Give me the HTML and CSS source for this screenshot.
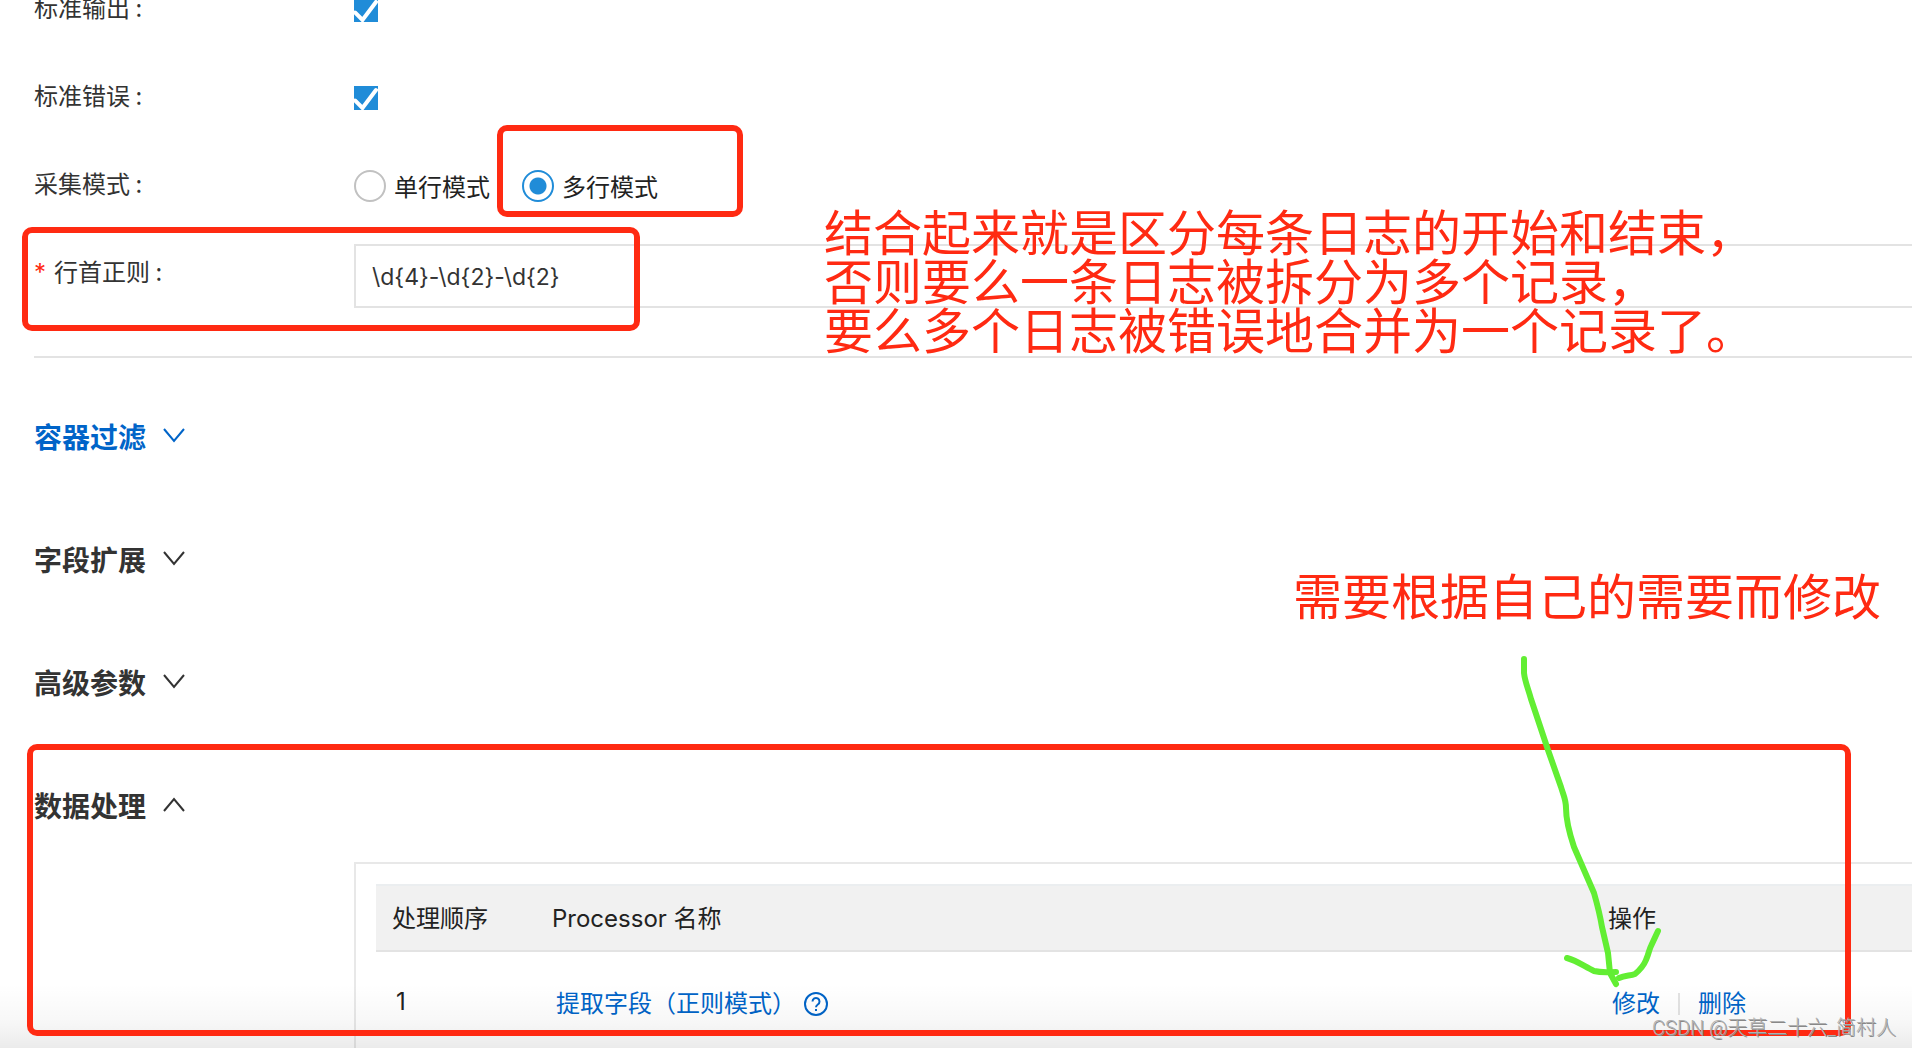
FILE: index.html
```html
<!DOCTYPE html>
<html lang="zh-CN">
<head>
<meta charset="utf-8">
<title>日志采集配置</title>
<link rel="stylesheet" href="styles.css">
</head>
<body>
<main class="page">
  <form class="form">
    <div class="row">
      <label class="row-label" for="stdout">标准输出 :</label>
      <input class="check" type="checkbox" id="stdout" checked>
    </div>
    <div class="row">
      <label class="row-label" for="stderr">标准错误 :</label>
      <input class="check" type="checkbox" id="stderr" checked>
    </div>
    <div class="row" role="radiogroup" aria-labelledby="mode-label">
      <span class="row-label" id="mode-label">采集模式 :</span>
      <div class="radios">
        <label class="radio-item"><input class="radio" type="radio" name="mode">单行模式</label>
        <label class="radio-item"><input class="radio" type="radio" name="mode" checked>多行模式</label>
      </div>
    </div>
    <div class="row row-input">
      <label class="row-label" for="regex"><span class="required">*</span>行首正则 :</label>
      <input class="text-input" type="text" id="regex" value="\d{4}-\d{2}-\d{2}">
    </div>
  </form>
  <hr class="divider">
  <div class="sections">
    <button class="section active" type="button">容器过滤
      <svg class="chevron" viewBox="0 0 24 16"><path d="M2 1l10 12L22 1"/></svg></button>
    <button class="section" type="button">字段扩展
      <svg class="chevron" viewBox="0 0 24 16"><path d="M2 1l10 12L22 1"/></svg></button>
    <button class="section" type="button">高级参数
      <svg class="chevron" viewBox="0 0 24 16"><path d="M2 1l10 12L22 1"/></svg></button>
    <button class="section" type="button" aria-expanded="true">数据处理
      <svg class="chevron" viewBox="0 0 24 16"><path d="M2 14L12 2l10 12"/></svg></button>
  </div>
  <div class="panel">
    <table class="table">
      <thead>
        <tr><th class="col-order">处理顺序</th><th>Processor 名称</th><th class="col-action">操作</th></tr>
      </thead>
      <tbody>
        <tr>
          <td>1</td>
          <td>
            <div class="cell">
              <a class="link" href="#">提取字段（正则模式）</a>
              <svg class="help" viewBox="0 0 24 24"><circle cx="12" cy="12" r="11"/><path d="M8.500 9.500a3.500 3.500 0 1 1 5.300 3c-1.200.8-1.800 1.300-1.800 2.700"/><path d="M12 17v2"/></svg>
            </div>
          </td>
          <td>
            <div class="cell">
              <a class="link" href="#">修改</a>
              <span class="separator"></span>
              <a class="link" href="#">删除</a>
            </div>
          </td>
        </tr>
      </tbody>
    </table>
  </div>

  <div class="shade"></div>
  <div class="mark mark-mode"></div>
  <div class="mark mark-regex"></div>
  <div class="mark mark-process"></div>
  <p class="note note-regex">结合起来就是区分每条日志的开始和结束，<br>否则要么一条日志被拆分为多个记录，<br>要么多个日志被错误地合并为一个记录了。</p>
  <p class="note note-edit">需要根据自己的需要而修改</p>
  <svg class="arrow" viewBox="1560 650 110 350">
    <path d="M1524 659V673C1525 682 1528 688 1531 699L1548 750L1561 787C1564 797 1566 800 1566 808C1566 822 1570 835 1574 847L1594 893C1598 907 1600 915 1602 927L1608 953L1610 973L1616 984"/>
    <path d="M1567 958C1578 961 1585 967 1594 971C1602 973 1609 972 1616 972"/>
    <path d="M1619 978C1625 975 1630 976 1635 974C1641 969 1644 965 1646 960C1649 953 1649 950 1651 946L1658 931"/>
  </svg>
  <div class="watermark">CSDN @天草二十六_简村人</div>
</main>
</body>
</html>
```
FILE: styles.css
```css
* { box-sizing: border-box; }

body {
  margin: 0;
  background: #fff;
  color: #333;
  font: 24px/32px Inter, "Noto Sans CJK SC", sans-serif;
}

.page {
  position: relative;
  height: 100vh;
  overflow: hidden;
  padding-left: 34px;
}

/* The form is scrolled so that its first row is cut by the window. */
.form { margin-top: -34px; }

.row {
  display: grid;
  grid-template-columns: 320px 1fr;
  align-items: center;
  height: 88px;
}
.row-input { height: 92px; }
.row-label { padding-bottom: 6px; font-family: "Noto Sans CJK SC", sans-serif; }
.row-input .row-label { padding-bottom: 8px; }
.required { margin-right: 8px; color: #ff2a12; font-family: Inter, sans-serif; }

.check, .radio { appearance: none; margin: 0; flex: none; }
.check {
  width: 24px;
  height: 24px;
  background: #208cd8 url('data:image/svg+xml,<svg xmlns="http://www.w3.org/2000/svg" viewBox="0 0 24 24"><path d="M1 14.500L8.500 22L22 4" fill="none" stroke="white" stroke-width="4" stroke-linecap="round"/></svg>');
}

.radios { display: flex; gap: 32px; }
.radio-item { display: flex; align-items: center; gap: 8px; color: #222; font-family: "Noto Sans CJK SC", sans-serif; }
.radio {
  width: 32px;
  height: 32px;
  border: 2px solid #c1c1c1;
  border-radius: 50%;
}
.radio:checked {
  border-color: #208cd8;
  background: radial-gradient(circle, #208cd8 8px, #fff 9px);
}

.text-input {
  width: 100%;
  height: 64px;
  padding: 2px 16px 0;
  border: 2px solid #e3e3e3;
  border-right: 0;
  background: #fff;
  color: #333;
  font: inherit;
  font-size: 23px;
}

.divider { height: 2px; margin: 34px 0 0; border: 0; background: #e3e3e3; }

.sections {
  display: flex;
  flex-direction: column;
  align-items: flex-start;
  gap: 83px;
  margin-top: 58px;
}
.section {
  display: flex;
  align-items: center;
  gap: 16px;
  padding: 0;
  border: 0;
  background: none;
  color: #333;
  font: bold 28px/40px "Noto Sans CJK SC", sans-serif;
}
.section.active { color: #0064c8; }
.chevron { width: 24px; height: 16px; fill: none; stroke: currentColor; stroke-width: 2; }

.panel {
  margin: 37px 0 0 320px;
  padding: 20px 0 60px 20px;
  border: 2px solid #e8e8e8;
  border-right: 0;
}
.table { width: 100%; table-layout: fixed; border-collapse: separate; border-spacing: 0; color: #222; }
.table th {
  height: 68px;
  padding: 2px 16px 0;
  border-top: 2px solid #ebeef0;
  border-bottom: 2px solid #e3e3e3;
  background: #f1f1f1;
  font-weight: 400;
  text-align: left;
}
.table td { height: 100px; padding: 0 20px; }
.col-order { width: 160px; }
.col-action { width: 320px; }
.cell { display: flex; align-items: center; padding-top: 3px; }
.link { color: #0064c8; text-decoration: none; }
.help { width: 24px; height: 24px; margin-left: 8px; fill: none; stroke: #0064c8; stroke-width: 2; }
.separator { width: 2px; height: 22px; margin: 0 18px; background: #e3e3e3; }

/* Soft shade over the lower edge of the window. */
.shade {
  position: absolute;
  right: 0;
  bottom: 0;
  left: 0;
  height: 64px;
  background: linear-gradient(rgba(0, 0, 0, 0), rgba(0, 0, 0, .03) 60%, rgba(0, 0, 0, .08));
}

/* Annotations drawn over the form */
.mark { position: absolute; border: 6px solid #ff2a12; border-radius: 10px; }
.mark-mode { left: 497px; top: 125px; width: 246px; height: 92px; }
.mark-regex { left: 22px; top: 227px; width: 618px; height: 104px; }
.mark-process { left: 27px; right: 61px; top: 744px; height: 292px; }

.note { position: absolute; margin: 0; color: #ff2a12; font: 49px/49px "Noto Sans CJK SC", sans-serif; white-space: nowrap; }
.note-regex { left: 824px; top: 205px; }
.note-edit { right: 31px; top: 569px; }

.arrow {
  position: absolute;
  right: 242px;
  top: 650px;
  width: 110px;
  height: 350px;
  overflow: visible;
  fill: none;
  stroke: #62ee33;
  stroke-width: 6;
  stroke-linecap: round;
  stroke-linejoin: round;
}

.watermark {
  position: absolute;
  right: 16px;
  bottom: 4px;
  color: #b0b0b0;
  font: 300 20px/32px Roboto, "Noto Sans CJK SC", sans-serif;
  text-shadow: 1px 1px 0 #888;
}
```
